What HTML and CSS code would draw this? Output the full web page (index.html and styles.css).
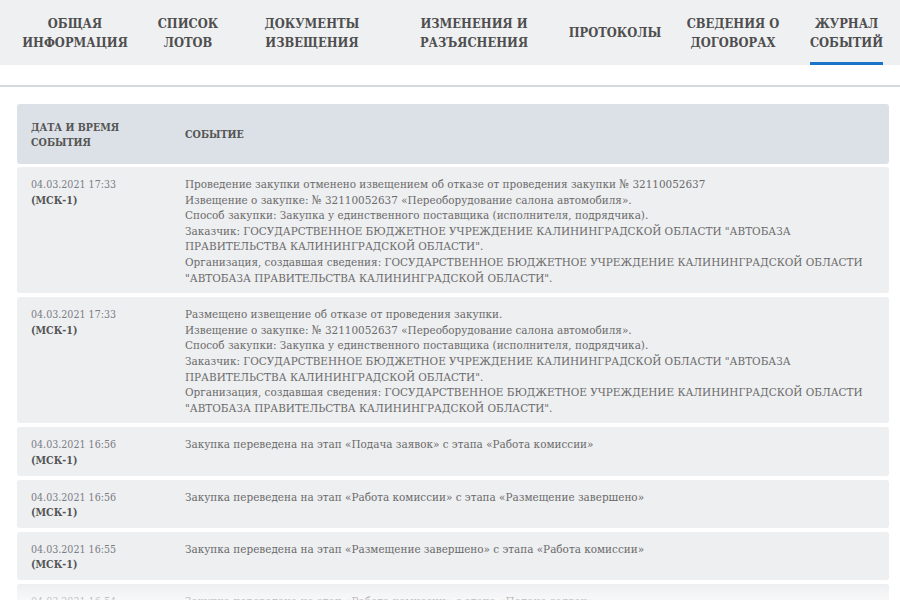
FILE: index.html
```html
<!DOCTYPE html>
<html lang="ru">
<head>
<meta charset="utf-8">
<link rel="stylesheet" href="styles.css">
</head>
<body>
<nav class="tabs">
  <div class="tab"><span>ОБЩАЯ<br>ИНФОРМАЦИЯ</span></div>
  <div class="tab"><span>СПИСОК<br>ЛОТОВ</span></div>
  <div class="tab"><span>ДОКУМЕНТЫ<br>ИЗВЕЩЕНИЯ</span></div>
  <div class="tab"><span>ИЗМЕНЕНИЯ И<br>РАЗЪЯСНЕНИЯ</span></div>
  <div class="tab"><span>ПРОТОКОЛЫ</span></div>
  <div class="tab"><span>СВЕДЕНИЯ О<br>ДОГОВОРАХ</span></div>
  <div class="tab active"><span>ЖУРНАЛ<br>СОБЫТИЙ</span></div>
</nav>
<div class="divider"></div>
<main class="journal">
  <div class="row head">
    <div class="c-date">ДАТА И ВРЕМЯ<br>СОБЫТИЯ</div>
    <div class="c-event">СОБЫТИЕ</div>
  </div>
  <div class="row">
    <div class="c-date"><span class="dt">04.03.2021 17:33</span><br><b>(МСК-1)</b></div>
    <div class="c-event">Проведение закупки отменено извещением об отказе от проведения закупки № 32110052637<br>Извещение о закупке: № 32110052637 «Переоборудование салона автомобиля».<br>Способ закупки: Закупка у единственного поставщика (исполнителя, подрядчика).<br>Заказчик: ГОСУДАРСТВЕННОЕ БЮДЖЕТНОЕ УЧРЕЖДЕНИЕ КАЛИНИНГРАДСКОЙ ОБЛАСТИ "АВТОБАЗА<br>ПРАВИТЕЛЬСТВА КАЛИНИНГРАДСКОЙ ОБЛАСТИ".<br>Организация, создавшая сведения: ГОСУДАРСТВЕННОЕ БЮДЖЕТНОЕ УЧРЕЖДЕНИЕ КАЛИНИНГРАДСКОЙ ОБЛАСТИ<br>"АВТОБАЗА ПРАВИТЕЛЬСТВА КАЛИНИНГРАДСКОЙ ОБЛАСТИ".</div>
  </div>
  <div class="row">
    <div class="c-date"><span class="dt">04.03.2021 17:33</span><br><b>(МСК-1)</b></div>
    <div class="c-event">Размещено извещение об отказе от проведения закупки.<br>Извещение о закупке: № 32110052637 «Переоборудование салона автомобиля».<br>Способ закупки: Закупка у единственного поставщика (исполнителя, подрядчика).<br>Заказчик: ГОСУДАРСТВЕННОЕ БЮДЖЕТНОЕ УЧРЕЖДЕНИЕ КАЛИНИНГРАДСКОЙ ОБЛАСТИ "АВТОБАЗА<br>ПРАВИТЕЛЬСТВА КАЛИНИНГРАДСКОЙ ОБЛАСТИ".<br>Организация, создавшая сведения: ГОСУДАРСТВЕННОЕ БЮДЖЕТНОЕ УЧРЕЖДЕНИЕ КАЛИНИНГРАДСКОЙ ОБЛАСТИ<br>"АВТОБАЗА ПРАВИТЕЛЬСТВА КАЛИНИНГРАДСКОЙ ОБЛАСТИ".</div>
  </div>
  <div class="row">
    <div class="c-date"><span class="dt">04.03.2021 16:56</span><br><b>(МСК-1)</b></div>
    <div class="c-event">Закупка переведена на этап «Подача заявок» с этапа «Работа комиссии»</div>
  </div>
  <div class="row">
    <div class="c-date"><span class="dt">04.03.2021 16:56</span><br><b>(МСК-1)</b></div>
    <div class="c-event">Закупка переведена на этап «Работа комиссии» с этапа «Размещение завершено»</div>
  </div>
  <div class="row">
    <div class="c-date"><span class="dt">04.03.2021 16:55</span><br><b>(МСК-1)</b></div>
    <div class="c-event">Закупка переведена на этап «Размещение завершено» с этапа «Работа комиссии»</div>
  </div>
  <div class="row">
    <div class="c-date"><span class="dt">04.03.2021 16:54</span><br><b>(МСК-1)</b></div>
    <div class="c-event">Закупка переведена на этап «Работа комиссии» с этапа «Подача заявок»</div>
  </div>
</main>
<div class="fade"></div>
</body>
</html>
```
FILE: styles.css
```css
html, body {
  margin: 0;
  padding: 0;
  background: #ffffff;
  overflow: hidden;
  height: 600px;
}
body {
  font-family: "DejaVu Serif", serif;
  font-stretch: semi-condensed;
  color: #6a6a6a;
}
.tabs {
  display: grid;
  grid-template-columns: 136px 90px 158px 166px 116px 120px 1fr;
  height: 65px;
  padding-left: 7px;
  background: #eff0f2;
  box-sizing: border-box;
}
.tab {
  display: flex;
  align-items: center;
  justify-content: center;
  text-align: center;
  font-size: 12.8px;
  font-weight: bold;
  line-height: 19px;
  color: #4e4e4e;
  height: 65px;
}
.tab.active span {
  align-self: stretch;
  display: flex;
  align-items: center;
  padding-top: 3px;
  border-bottom: 3px solid #1a74c9;
  box-sizing: border-box;
}
.divider {
  margin-top: 20px;
  height: 2px;
  background: #d6d9dd;
}
.journal {
  margin: 17px 11px 0 17px;
  display: flex;
  flex-direction: column;
  gap: 4px;
}
.row {
  display: flex;
  background: #eeeff1;
  border-radius: 3px;
  padding: 10px 0 7px;
  font-size: 11.6px;
  line-height: 15.6px;
}
.row.head {
  background: #dce1e7;
  height: 60px;
  box-sizing: border-box;
  align-items: center;
  padding: 1px 0 0;
  font-weight: bold;
  color: #555;
  line-height: 15px;
  margin-bottom: -1px;
}
.row.head .c-date,
.row.head .c-event {
  font-size: 10.6px;
}
.c-date {
  width: 168px;
  padding-left: 14px;
  flex: none;
  box-sizing: border-box;
  font-size: 10.6px;
}
.c-event {
  flex: 1;
}
.dt {
  color: #7a7d84;
}
.c-date b {
  color: #555;
}
.fade {
  position: fixed;
  left: 0;
  right: 0;
  bottom: 0;
  height: 16px;
  background: linear-gradient(to bottom, rgba(255,255,255,0), rgba(255,255,255,0.6));
  pointer-events: none;
}
```
